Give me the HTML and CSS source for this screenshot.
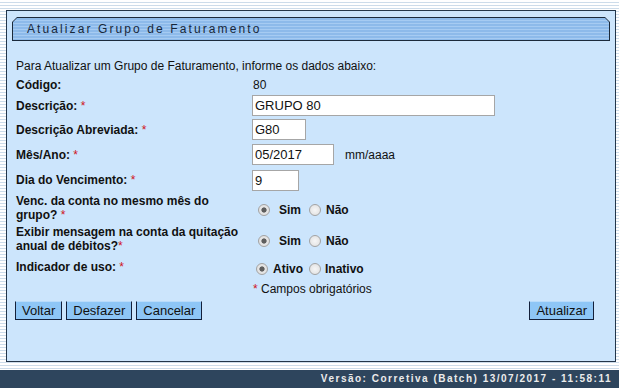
FILE: index.html
```html
<!DOCTYPE html>
<html lang="pt-BR">
<head>
  <meta charset="UTF-8" />
  <title>Atualizar Grupo de Faturamento</title>
  <link rel="stylesheet" href="styles.css">
</head>
<body>
  <div class="panel">
    <div class="title-bar">
      <div class="title-inner">Atualizar Grupo de Faturamento</div>
    </div>

    <form class="form" onsubmit="return false">
      <p class="intro">Para Atualizar um Grupo de Faturamento, informe os dados abaixo:</p>

      <div class="row r-codigo">
        <span class="label">Código:</span>
        <span class="value text">80</span>
      </div>

      <div class="row r-desc">
        <span class="label">Descrição: <span class="req">*</span></span>
        <span class="value"><input type="text" class="inp w-desc" value="GRUPO 80"></span>
      </div>

      <div class="row r-abrev">
        <span class="label">Descrição Abreviada: <span class="req">*</span></span>
        <span class="value"><input type="text" class="inp w-abrev" value="G80"></span>
      </div>

      <div class="row r-mes">
        <span class="label">Mês/Ano: <span class="req">*</span></span>
        <span class="value"><input type="text" class="inp w-mes" value="05/2017"><span class="hint">mm/aaaa</span></span>
      </div>

      <div class="row r-dia">
        <span class="label">Dia do Vencimento: <span class="req">*</span></span>
        <span class="value"><input type="text" class="inp w-dia" value="9"></span>
      </div>

      <div class="row r-venc">
        <span class="label">Venc. da conta no mesmo mês do<br>grupo? <span class="req">*</span></span>
        <span class="value radios yn">
          <input type="radio" name="venc" checked><b>Sim</b>
          <input type="radio" name="venc"><b>Não</b>
        </span>
      </div>

      <div class="row r-exibir">
        <span class="label">Exibir mensagem na conta da quitação<br>anual de débitos?<span class="req">*</span></span>
        <span class="value radios yn">
          <input type="radio" name="exibir" checked><b>Sim</b>
          <input type="radio" name="exibir"><b>Não</b>
        </span>
      </div>

      <div class="row r-uso">
        <span class="label">Indicador de uso: <span class="req">*</span></span>
        <span class="value radios uso">
          <input type="radio" name="uso" checked><b>Ativo</b>
          <input type="radio" name="uso"><b>Inativo</b>
        </span>
      </div>

      <div class="row r-campos">
        <span class="label"></span>
        <span class="note"><span class="req">*</span> Campos obrigatórios</span>
      </div>

      <div class="actions">
        <div class="left">
          <button type="button" class="btn">Voltar</button>
          <button type="button" class="btn">Desfazer</button>
          <button type="button" class="btn">Cancelar</button>
        </div>
        <button type="submit" class="btn">Atualizar</button>
      </div>
    </form>
  </div>

  <div class="gap"></div>
  <div class="footer">Versão: Corretiva (Batch) 13/07/2017 - 11:58:11</div>
</body>
</html>
```

FILE: styles.css
```css
* {
  box-sizing: border-box;
  margin: 0;
  padding: 0;
}

body {
  font-family: "Liberation Sans", Arial, sans-serif;
  font-size: 12px;
  color: #111;
  height: 388px;
  overflow: hidden;
  background: repeating-linear-gradient(to bottom, #ffffff 0, #ffffff 2px, #cddcea 2px, #cddcea 3px);
}

/* main panel */
.panel {
  margin: 10px 3px 0 6px;
  height: 352px;
  background: #cce5fc;
  border: 1px solid #23364a;
  padding: 6px 5px 0 5px;
}

.title-bar {
  height: 24px;
  background: #1b2a3b;
  padding: 1px;
  clip-path: polygon(5px 0, calc(100% - 5px) 0, 100% 5px, 100% 100%, 0 100%, 0 5px);
}

.title-inner {
  height: 100%;
  padding-left: 14px;
  line-height: 22px;
  font-size: 12px;
  letter-spacing: 2.1px;
  color: #17273a;
  background: repeating-linear-gradient(to bottom, #8dbaea 0, #8dbaea 2px, #a6cbf2 2px, #a6cbf2 3px);
  clip-path: polygon(4px 0, calc(100% - 4px) 0, 100% 4px, 100% 100%, 0 100%, 0 4px);
}

/* form */
.form {
  margin-left: 4px;
}

.intro {
  margin-top: 17px;
  height: 17px;
  line-height: 17px;
}

.row {
  display: grid;
  grid-template-columns: 236px 1fr;
  align-items: center;
}

.r-codigo { height: 19px; }
.r-desc { height: 23px; }
.r-abrev { height: 25px; }
.r-mes { height: 25px; }
.r-dia { height: 26px; }
.r-venc { height: 30px; }
.r-exibir { height: 32px; }
.r-uso { height: 24px; }
.r-campos { height: 20px; }

.label {
  font-weight: bold;
  line-height: 14px;
}

.req {
  color: #d0141a;
  font-weight: normal;
}

.value {
  display: flex;
  align-items: center;
}

.value.text,
.note {
  padding-left: 1px;
}

.inp {
  height: 21px;
  border: 1px solid #a6a6a6;
  background: #fff;
  font-family: "Liberation Sans", Arial, sans-serif;
  font-size: 13px;
  color: #111;
  padding: 0 2px;
  outline: none;
}

.w-desc { width: 243px; }
.w-abrev { width: 54px; }
.w-mes { width: 82px; }
.w-dia { width: 47px; }

.hint {
  margin-left: 11px;
}

/* radio buttons */
.radios input {
  appearance: none;
  -webkit-appearance: none;
  width: 12px;
  height: 12px;
  border: 1px solid #a3a3a3;
  border-radius: 50%;
  background: radial-gradient(circle, #f6f6f6 0, #dedede 100%);
}

.radios input:checked {
  background: radial-gradient(circle, #5e5e5e 0, #5e5e5e 2.2px, #e6e6e6 3px, #dcdcdc 100%);
}

.radios b {
  font-size: 12px;
}

.yn { padding-top: 4px; }
.yn input:first-child { margin: 0 9px 0 6px; }
.yn input:last-of-type { margin: 0 5px 0 8px; }

.uso { padding-top: 3px; }
.uso input:first-child { margin: 0 5px 0 4px; }
.uso input:last-of-type { margin: 0 4px 0 6px; }

/* buttons */
.actions {
  display: flex;
  justify-content: space-between;
  margin-top: 2px;
  padding-right: 16px;
}

.left {
  display: flex;
  gap: 4px;
  margin-left: -1px;
}

.btn {
  height: 19px;
  padding: 0 6px;
  font-family: "Liberation Sans", Arial, sans-serif;
  font-size: 13px;
  line-height: 17px;
  color: #111;
  background: #8ec6f6;
  border: 1px solid #14203a;
  border-top-color: #b9dcfb;
  cursor: pointer;
}

/* footer */
.gap {
  height: 8px;
}

.footer {
  height: 18px;
  line-height: 18px;
  background: #2e455d;
  color: #ececec;
  font-size: 10px;
  font-weight: bold;
  letter-spacing: 1.5px;
  text-align: right;
  padding-right: 7px;
}
```
